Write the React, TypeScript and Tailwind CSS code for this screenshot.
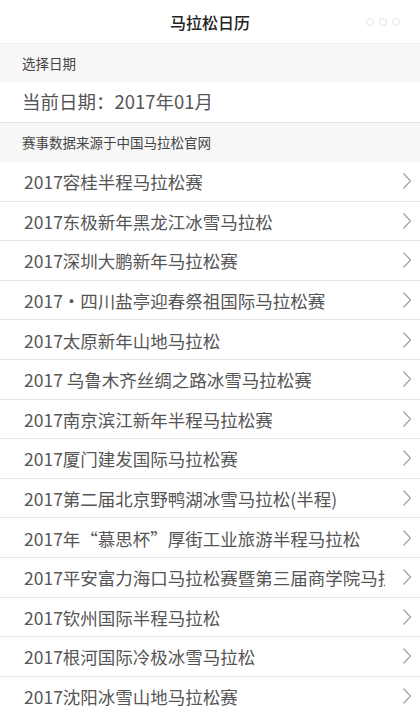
const races = [
  '2017容桂半程马拉松赛',
  '2017东极新年黑龙江冰雪马拉松',
  '2017深圳大鹏新年马拉松赛',
  '2017・四川盐亭迎春祭祖国际马拉松赛',
  '2017太原新年山地马拉松',
  '2017 乌鲁木齐丝绸之路冰雪马拉松赛',
  '2017南京滨江新年半程马拉松赛',
  '2017厦门建发国际马拉松赛',
  '2017第二届北京野鸭湖冰雪马拉松(半程)',
  '2017年“慕思杯”厚街工业旅游半程马拉松',
  '2017平安富力海口马拉松赛暨第三届商学院马拉松赛',
  '2017钦州国际半程马拉松',
  '2017根河国际冷极冰雪马拉松',
  '2017沈阳冰雪山地马拉松赛',
]

function Chevron() {
  return (
    <svg width="10" height="18" viewBox="0 0 10 18" className="shrink-0">
      <path d="M1.5 1.5 L8.5 9 L1.5 16.5" fill="none" stroke="#a0a0a0" strokeWidth="1.2" />
    </svg>
  )
}

export default function App() {
  return (
    <div
      className="w-[420px] h-[707px] overflow-hidden bg-white text-[#555]"
      style={{ fontFamily: '"Noto Sans CJK SC", "Liberation Sans", sans-serif' }}
    >
      {/* Title bar */}
      <header className="relative h-[44px] flex items-center justify-center border-b border-[#eeeeee]">
        <h1 className="text-[16px] font-medium text-[#222]">马拉松日历</h1>
        <div className="absolute right-[20px] top-1/2 -translate-y-1/2 flex gap-[5px]">
          <span className="w-[8px] h-[8px] rounded-full border border-[#e4e4e4]" />
          <span className="w-[8px] h-[8px] rounded-full border border-[#e4e4e4]" />
          <span className="w-[8px] h-[8px] rounded-full border border-[#e4e4e4]" />
        </div>
      </header>

      {/* Date picker */}
      <div className="h-[38px] flex items-center px-[22px] bg-[#f7f7f7] text-[13.5px] text-[#444]">
        选择日期
      </div>
      <div className="h-[41px] flex items-center px-[22px] text-[18.5px] text-[#555] border-b border-[#e5e5e5]">
        当前日期：2017年01月
      </div>

      {/* Source note */}
      <div className="h-[39px] flex items-center px-[22px] bg-[#f7f7f7] text-[13.5px] text-[#444]">
        赛事数据来源于中国马拉松官网
      </div>

      {/* Race list */}
      <ul>
        {races.map((name, i) => (
          <li
            key={i}
            className="h-[39.6px] flex items-center pl-[24px] pr-[8px] border-b border-[#e5e5e5]"
          >
            <span className="flex-1 min-w-0 overflow-hidden whitespace-nowrap text-[17.5px] leading-[26px] pt-[2px] mr-[17px]">
              {name}
            </span>
            <Chevron />
          </li>
        ))}
      </ul>
    </div>
  )
}
